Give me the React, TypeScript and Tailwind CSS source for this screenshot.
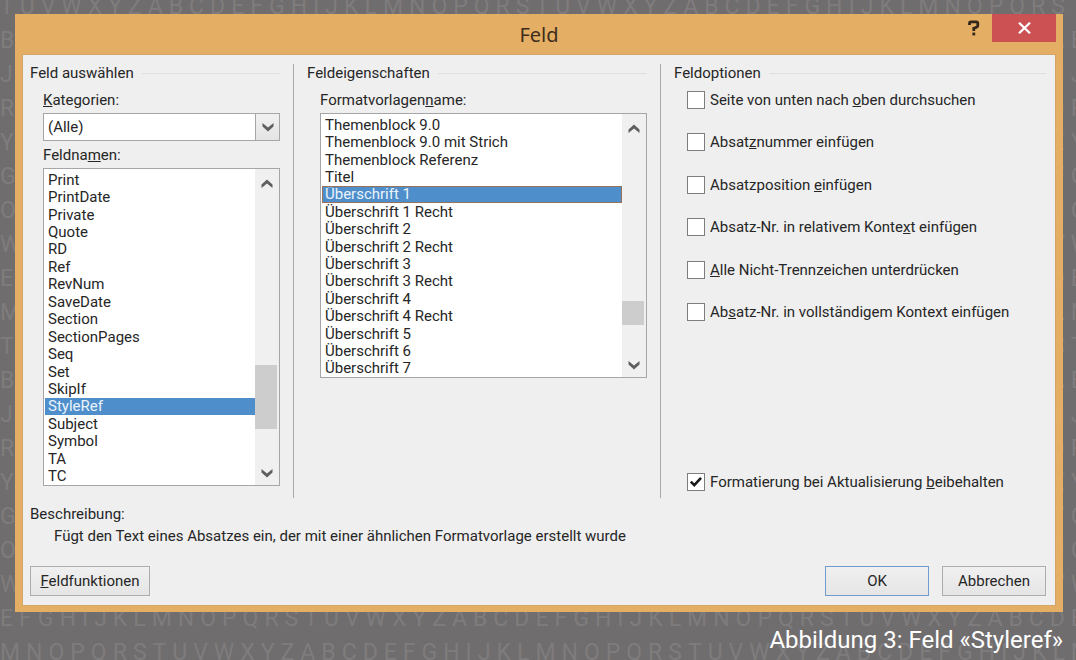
import React, { useState } from "react";

const ALPHABET = "ABCDEFGHIJKLMNOPQRSTUVWXYZ";

// first letter of every row of the backdrop
const rowStarts = "TBJRYGOWEMTBJRYGOWEM".split("");

const fieldNames = [
  "Print",
  "PrintDate",
  "Private",
  "Quote",
  "RD",
  "Ref",
  "RevNum",
  "SaveDate",
  "Section",
  "SectionPages",
  "Seq",
  "Set",
  "SkipIf",
  "StyleRef",
  "Subject",
  "Symbol",
  "TA",
  "TC",
];

const styleNames = [
  "Themenblock 9.0",
  "Themenblock 9.0 mit Strich",
  "Themenblock Referenz",
  "Titel",
  "Überschrift 1",
  "Überschrift 1 Recht",
  "Überschrift 2",
  "Überschrift 2 Recht",
  "Überschrift 3",
  "Überschrift 3 Recht",
  "Überschrift 4",
  "Überschrift 4 Recht",
  "Überschrift 5",
  "Überschrift 6",
  "Überschrift 7",
];

// [before, access key, after]
const options: [string, string, string][] = [
  ["Seite von unten nach ", "o", "ben durchsuchen"],
  ["Absat", "z", "nummer einfügen"],
  ["Absatzposition ", "e", "infügen"],
  ["Absatz-Nr. in relativem Konte", "x", "t einfügen"],
  ["", "A", "lle Nicht-Trennzeichen unterdrücken"],
  ["Ab", "s", "atz-Nr. in vollständigem Kontext einfügen"],
];

const Backdrop: React.FC = () => (
  <div
    aria-hidden="true"
    className="absolute inset-0 overflow-hidden font-['Roboto',sans-serif] text-[23px] leading-[34px] text-[#7f7c7d] select-none"
  >
    <div className="-mt-2.5">
      {rowStarts.map((start, row) => (
        <div key={row} className="flex gap-1.5">
          {Array.from({ length: 53 }, (_, i) => (
            <span key={i}>{ALPHABET[(ALPHABET.indexOf(start) + i) % 26]}</span>
          ))}
        </div>
      ))}
    </div>
  </div>
);

const Chevron: React.FC<{ up?: boolean }> = ({ up }) => (
  <svg width="12" height="9" viewBox="0 0 12 9" fill="#5f5f5f">
    {up ? (
      <path d="M6 0.5 11.5 5.5V9L6 4.5 0.5 9V5.5Z" />
    ) : (
      <path d="M6 8.5 11.5 3.5V0L6 4.5 0.5 0V3.5Z" />
    )}
  </svg>
);

const GroupTitle: React.FC<{ children: React.ReactNode }> = ({ children }) => (
  <div className="flex h-[18px] items-center gap-2">
    <h2>{children}</h2>
    <div className="h-px flex-1 bg-[#dfdfdf]" />
  </div>
);

interface ListBoxProps {
  labelId: string;
  items: string[];
  initial: string;
  heightClass: string;
  selectedClass: string;
  thumb: React.ReactNode;
}

const ListBox: React.FC<ListBoxProps> = ({
  labelId,
  items,
  initial,
  heightClass,
  selectedClass,
  thumb,
}) => {
  const [selected, setSelected] = useState(initial);

  return (
    <div className={`flex border border-[#a6a6a8] bg-white ${heightClass}`}>
      <ul
        role="listbox"
        aria-labelledby={labelId}
        className="flex flex-1 flex-col pt-0.5 pl-px"
      >
        {items.map((item) => (
          <li
            key={item}
            role="option"
            aria-selected={item === selected}
            onClick={() => setSelected(item)}
            className={`flex flex-1 items-center px-[3px] leading-4 ${
              item === selected ? selectedClass : ""
            }`}
          >
            {item}
          </li>
        ))}
      </ul>
      <div className="flex w-6 flex-col items-start bg-[#f0f0f0]">
        <button
          aria-label="Nach oben"
          className="flex h-7 w-full items-center justify-center"
        >
          <Chevron up />
        </button>
        {thumb}
        <button
          aria-label="Nach unten"
          className="flex h-6 w-full items-center justify-center"
        >
          <Chevron />
        </button>
      </div>
    </div>
  );
};

const CheckBox: React.FC<{
  children: React.ReactNode;
  defaultChecked?: boolean;
}> = ({ children, defaultChecked }) => (
  <label className="flex h-[18px] items-center gap-[5px] whitespace-nowrap">
    <span className="grid">
      <input
        type="checkbox"
        defaultChecked={defaultChecked}
        className="peer col-start-1 row-start-1 size-[18px] appearance-none border border-[#7d7d7d] bg-white"
      />
      <svg
        viewBox="0 0 18 18"
        className="pointer-events-none invisible col-start-1 row-start-1 size-[18px] peer-checked:visible"
        fill="none"
        stroke="#1a1a1a"
        strokeWidth="2.6"
      >
        <path d="M3.8 8.6 7.3 12.2 14 4.8" />
      </svg>
    </span>
    <span>{children}</span>
  </label>
);

const App: React.FC = () => {
  return (
    <div className="relative min-h-screen overflow-hidden bg-[#706d6e]">
      <Backdrop />
      <div className="relative pt-3.5 pr-[13px] pl-[15px] font-['Roboto',sans-serif] text-[15px] leading-[18px] text-[#262626]">
        <main className="bg-[#e4ae65] px-[7px] pb-1.5">
          <header className="grid h-10 grid-cols-[1fr_auto_1fr]">
            <h1 className="col-start-2 self-center pt-0.5 font-['Noto_Sans',sans-serif] text-xl text-[#3e2d1b]">
              Feld
            </h1>
            <div className="flex items-start justify-end">
              <button
                aria-label="Hilfe"
                className="flex h-7 w-9 items-center justify-center"
              >
                <svg
                  width="12"
                  height="16"
                  viewBox="0 0 12 16"
                  fill="none"
                  stroke="#33261a"
                  strokeWidth="2.8"
                >
                  <path d="M1.5 5V3.4Q1.5 1.9 3 1.9H8.2Q9.8 1.9 9.8 3.4V5.6Q9.8 6.8 8.6 7.2L5.8 8.3V11" />
                  <path d="M5.8 12.6V15.4" />
                </svg>
              </button>
              <button
                aria-label="Schließen"
                className="flex h-7 w-16 items-center justify-center bg-[#cb5153]"
              >
                <svg
                  width="13"
                  height="12"
                  viewBox="0 0 13 12"
                  stroke="#fff"
                  strokeWidth="2.2"
                >
                  <path d="M1 0.7 12 11.3M12 0.7 1 11.3" />
                </svg>
              </button>
            </div>
          </header>

          <div className="border border-[#d5a467] bg-[#efefef] pt-[9px] pr-[9px] pb-[9px] pl-[7px]">
            <div className="grid grid-cols-[264fr_367fr_385fr]">
              <section className="border-r border-[#a9a9a9] pr-[13px]">
                <GroupTitle>Feld auswählen</GroupTitle>
                <div className="flex flex-col pl-[13px]">
                  <label htmlFor="category" className="mt-[9px]">
                    <u>K</u>ategorien:
                  </label>
                  <div className="mt-1 grid h-7">
                    <select
                      id="category"
                      className="col-start-1 row-start-1 appearance-none border border-[#a6a6a8] bg-white px-1"
                    >
                      <option>(Alle)</option>
                    </select>
                    <span className="pointer-events-none col-start-1 row-start-1 flex w-[25px] items-center justify-center justify-self-end border border-[#a6a6a8] bg-linear-to-b from-[#f1f1f1] to-[#e4e4e4]">
                      <Chevron />
                    </span>
                  </div>
                  <span id="field-names" className="mt-[5px] mb-1">
                    Feldna<u>m</u>en:
                  </span>
                  <ListBox
                    labelId="field-names"
                    items={fieldNames}
                    initial="StyleRef"
                    heightClass="h-[318px]"
                    selectedClass="bg-[#4e8ecb] text-[#eaf3fb]"
                    thumb={
                      <>
                        <div className="flex-1" />
                        <div className="mb-8 h-16 w-[22px] bg-[#cdcdcd]" />
                      </>
                    }
                  />
                </div>
              </section>

              <section className="border-r border-[#a9a9a9] pr-[13px] pb-[120px] pl-[13px]">
                <GroupTitle>Feldeigenschaften</GroupTitle>
                <div className="flex flex-col pl-[13px]">
                  <span id="style-names" className="mt-[9px] mb-1">
                    Formatvorlagen<u>n</u>ame:
                  </span>
                  <ListBox
                    labelId="style-names"
                    items={styleNames}
                    initial="Überschrift 1"
                    heightClass="h-[265px]"
                    selectedClass="bg-[#4e8ecb] text-[#eaf3fb] outline -outline-offset-1 outline-[#9a7257]"
                    thumb={
                      <>
                        <div className="flex-1" />
                        <div className="mb-7 h-6 w-[22px] bg-[#cdcdcd]" />
                      </>
                    }
                  />
                </div>
              </section>

              <section className="pl-[13px]">
                <GroupTitle>Feldoptionen</GroupTitle>
                <div className="mt-[9px] flex h-[230px] flex-col justify-between pl-[13px]">
                  {options.map(([before, key, after]) => (
                    <CheckBox key={before + key}>
                      {before}
                      <u>{key}</u>
                      {after}
                    </CheckBox>
                  ))}
                </div>
                <div className="mt-[152px] pl-[13px]">
                  <CheckBox defaultChecked>
                    Formatierung bei Aktualisierung <u>b</u>eibehalten
                  </CheckBox>
                </div>
              </section>
            </div>

            <h2 className="mt-[7px]">Beschreibung:</h2>
            <p className="mt-1 pl-6">
              Fügt den Text eines Absatzes ein, der mit einer ähnlichen
              Formatvorlage erstellt wurde
            </p>
            <footer className="mt-[21px] flex gap-[13px]">
              <button className="h-[30px] w-[120px] border border-[#adadad] bg-linear-to-b from-[#f0f0f0] to-[#e5e5e5]">
                <u>F</u>eldfunktionen
              </button>
              <button className="ml-auto h-[30px] w-[104px] border border-[#6f9bd1] bg-linear-to-b from-[#f0f0f0] to-[#e5e5e5]">
                OK
              </button>
              <button className="h-[30px] w-[104px] border border-[#adadad] bg-linear-to-b from-[#f0f0f0] to-[#e5e5e5]">
                Abbrechen
              </button>
            </footer>
          </div>
        </main>
        <p className="pt-3 text-right font-['Roboto',sans-serif] text-2xl leading-8 text-white">
          Abbildung 3: Feld «Styleref»
        </p>
      </div>
    </div>
  );
};

export default App;
